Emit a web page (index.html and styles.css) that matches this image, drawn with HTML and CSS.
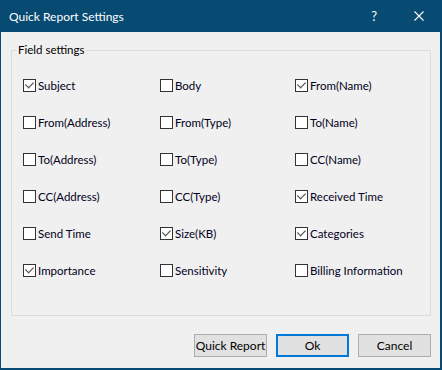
FILE: index.html
```html
<!DOCTYPE html>
<html lang="en">
<head>
<meta charset="UTF-8">
<title>Quick Report Settings</title>
<link rel="stylesheet" href="styles.css">
</head>
<body>

<div class="window">
  <div class="titlebar">
    <span class="title">Quick Report Settings</span>
    <span class="help">?</span>
    <svg class="close" width="10" height="10" viewBox="0 0 10 10"><path d="M0.5 0.5L9.5 9.5M9.5 0.5L0.5 9.5" stroke="#fff" stroke-width="1.1"/></svg>
  </div>

  <fieldset class="group">
    <legend>Field settings</legend>
    <div class="fields">
      <label class="check"><span class="box on"></span>Subject</label>
      <label class="check"><span class="box"></span>Body</label>
      <label class="check"><span class="box on"></span>From(Name)</label>

      <label class="check"><span class="box"></span>From(Address)</label>
      <label class="check"><span class="box"></span>From(Type)</label>
      <label class="check"><span class="box"></span>To(Name)</label>

      <label class="check"><span class="box"></span>To(Address)</label>
      <label class="check"><span class="box"></span>To(Type)</label>
      <label class="check"><span class="box"></span>CC(Name)</label>

      <label class="check"><span class="box"></span>CC(Address)</label>
      <label class="check"><span class="box"></span>CC(Type)</label>
      <label class="check"><span class="box on"></span>Received Time</label>

      <label class="check"><span class="box"></span>Send Time</label>
      <label class="check"><span class="box on"></span>Size(KB)</label>
      <label class="check"><span class="box on"></span>Categories</label>

      <label class="check"><span class="box on"></span>Importance</label>
      <label class="check"><span class="box"></span>Sensitivity</label>
      <label class="check"><span class="box"></span>Billing Information</label>
    </div>
  </fieldset>

  <div class="buttons">
    <button class="btn">Quick Report</button>
    <button class="btn default">Ok</button>
    <button class="btn">Cancel</button>
  </div>
</div>

</body>
</html>
```

FILE: styles.css
```css
body {
  margin: 0;
  background-color: #074a72;
  font-family: Lato, "Noto Sans", sans-serif;
  font-size: 11.5px;
  color: #000;
}

.window {
  width: 442px;
  height: 370px;
  box-sizing: border-box;
  border: solid #074a72;
  border-width: 0 2px 2px 1px;
  background-color: #f0f0f0;
}

.titlebar {
  height: 32px;
  margin: 0 -2px 0 -1px;
  padding: 0 18px 0 9px;
  background-color: #074a72;
  color: #fff;
  display: flex;
  align-items: center;
}

.title {
  flex: 1;
  font-size: 12px;
}

.help {
  font-size: 13px;
  margin-right: 37px;
}

.close {
  display: block;
}

.group {
  margin: 10px 9px 0 10px;
  padding: 9px 0 26px 5px;
  border: 1px solid #dcdcdc;
}

.group legend {
  padding: 0 1px;
  line-height: 16px;
}

.fields {
  display: grid;
  grid-template-columns: 137px 135px auto;
  grid-auto-rows: 37px;
  margin-left: 6px;
}

.check {
  display: flex;
  align-items: center;
  color: #000020;
}

.box {
  width: 11px;
  height: 11px;
  border: 1px solid #333;
  background-color: #fff;
  margin-right: 2px;
  position: relative;
}

.box.on::after {
  content: "";
  position: absolute;
  left: 2px;
  top: 0px;
  width: 6px;
  height: 3px;
  border-left: 1px solid #555;
  border-bottom: 1px solid #555;
  transform: translate(0, 2px) rotate(-45deg) scale(1.1, 1.3);
}

.buttons {
  display: flex;
  justify-content: flex-end;
  gap: 9px;
  margin: 18px 9px 0 0;
}

.btn {
  width: 73px;
  height: 23px;
  box-sizing: border-box;
  border: 1px solid #adadad;
  background-color: #e1e1e1;
  font-family: inherit;
  font-size: 12px;
  color: #000;
  padding: 0;
  white-space: nowrap;
}

.btn.default {
  border: 2px solid #0078d7;
}
```
